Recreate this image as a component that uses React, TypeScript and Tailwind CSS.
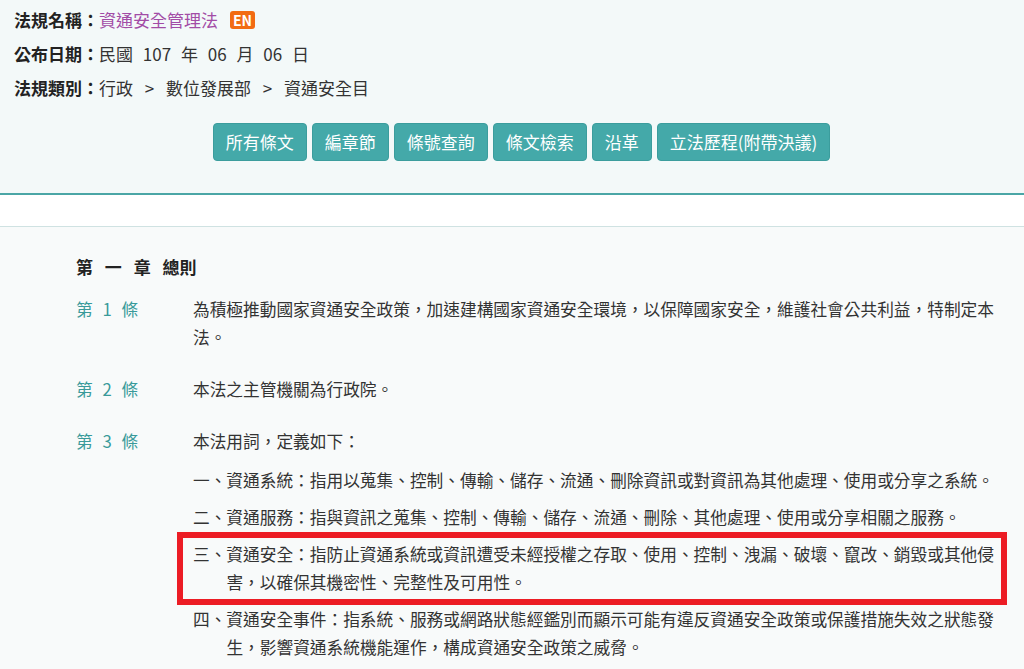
import React from "react";

const font = "font-['Noto_Sans_CJK_TC','Noto_Sans_CJK_SC',sans-serif]";

const buttons = ["所有條文", "編章節", "條號查詢", "條文檢索", "沿革", "立法歷程(附帶決議)"];

type Item = { text: React.ReactNode; mark?: boolean };

const items: Item[] = [
  { text: "一、資通系統：指用以蒐集、控制、傳輸、儲存、流通、刪除資訊或對資訊為其他處理、使用或分享之系統。" },
  { text: "二、資通服務：指與資訊之蒐集、控制、傳輸、儲存、流通、刪除、其他處理、使用或分享相關之服務。" },
  {
    text: (
      <>
        三、資通安全：指防止資通系統或資訊遭受未經授權之存取、使用、控制、洩漏、破壞、竄改、銷毀或其他侵
        <br />
        害，以確保其機密性、完整性及可用性。
      </>
    ),
    mark: true,
  },
  { text: "四、資通安全事件：指系統、服務或網路狀態經鑑別而顯示可能有違反資通安全政策或保護措施失效之狀態發生，影響資通系統機能運作，構成資通安全政策之威脅。" },
];

function Article({ no, children }: { no: number; children: React.ReactNode }) {
  return (
    <div className="flex">
      <div className="w-[117px] shrink-0 text-[#3a9a9a] [word-spacing:6px]">第 {no} 條</div>
      <div className="w-[810px] text-[#333]">{children}</div>
    </div>
  );
}

export default function App() {
  return (
    <div className={`${font} min-h-[669px] bg-[#f8fafa]`}>
      {/* law header */}
      <div className="bg-[#f3f9f9] border-b-2 border-[#4aa6a6] shadow-[0_2px_2px_rgba(74,166,166,0.15)] pt-[3px] pb-[32px]">
        <div className="px-[14px] text-[17px] text-[#333]">
          <div className="h-[34px] flex items-center">
            <span className="font-bold text-[#222]">法規名稱：</span>
            <span className="text-[#a24ca6]">資通安全管理法</span>
            <span className="ml-[12px] rounded-[3px] bg-[#f26b12] px-[3px] text-[14px] leading-[18px] font-bold text-white">EN</span>
          </div>
          <div className="h-[34px] flex items-center">
            <span className="font-bold text-[#222]">公布日期：</span>
            <span className="[word-spacing:6px]">民國 107 年 06 月 06 日</span>
          </div>
          <div className="h-[34px] flex items-center">
            <span className="font-bold text-[#222]">法規類別：</span>
            <span className="[word-spacing:8px]">行政 &gt; 數位發展部 &gt; 資通安全目</span>
          </div>
        </div>
        <div className="mt-[18px] flex justify-center gap-[5px] pl-[19px]">
          {buttons.map((b) => (
            <button
              key={b}
              className="h-[38px] rounded-[4px] border border-[#3b9d9d] bg-[#44a9a9] px-[12px] text-[17px] text-white"
            >
              {b}
            </button>
          ))}
        </div>
      </div>

      <div className="h-[32px] bg-white border-b border-[#cfe2e2]" />

      {/* articles */}
      <div className="pl-[76px] pt-[26px] pb-10 text-[16.7px] leading-[28px]">
        <div className="font-bold text-[#222] text-[17px] [word-spacing:8px]">第 一 章 總則</div>

        <div className="mt-[14px] flex flex-col gap-[24px]">
          <Article no={1}>
            為積極推動國家資通安全政策，加速建構國家資通安全環境，以保障國家安全，維護社會公共利益，特制定本法。
          </Article>
          <Article no={2}>本法之主管機關為行政院。</Article>
          <Article no={3}>
            <div>本法用詞，定義如下：</div>
            <div className="mt-[11px] flex flex-col gap-[9px]">
              {items.map((it, i) => (
                <div key={i} className="relative pl-[2em] indent-[-2em]">
                  {it.text}
                  {it.mark && (
                    <div className="pointer-events-none absolute -top-[8px] -bottom-[9px] -left-[16px] -right-[4px] border-[6px] border-[#ec1c24]" />
                  )}
                </div>
              ))}
            </div>
          </Article>
        </div>
      </div>
    </div>
  );
}
